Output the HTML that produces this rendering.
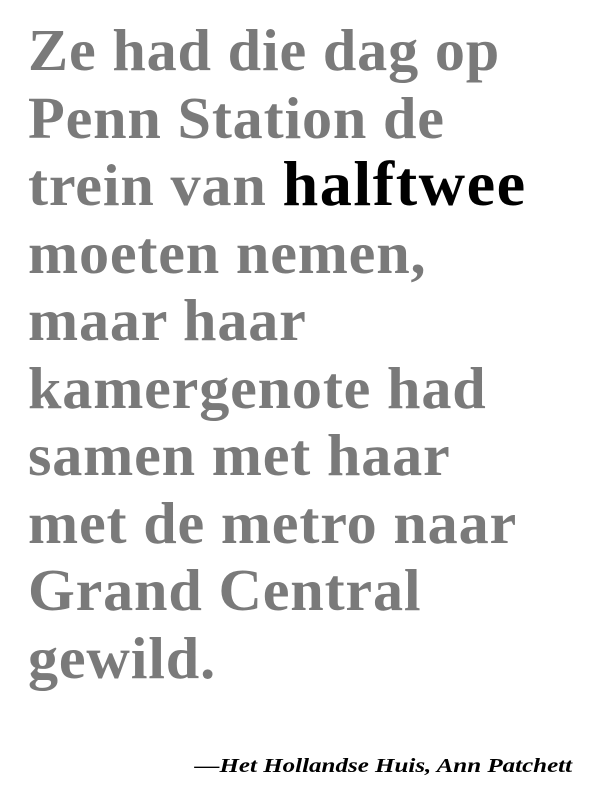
<!DOCTYPE html>
<html><head><meta charset="utf-8"><style>
html,body{margin:0;padding:0;background:#fff;width:600px;height:800px;overflow:hidden}
.t{position:absolute;left:28px;top:17px;font-family:"Liberation Serif",serif;font-weight:bold;font-size:59px;line-height:67.5px;color:#7a7a7a;white-space:nowrap;letter-spacing:0.8px;transform:scaleX(1.02);transform-origin:left top}
.t b{color:#000;font-size:63px;letter-spacing:1.5px;line-height:0}
.c{position:absolute;right:28px;top:755px;font-family:"Liberation Serif",serif;font-style:italic;font-weight:bold;font-size:20px;color:#000;white-space:nowrap;transform:scaleX(1.25);transform-origin:right top}
</style></head><body>
<div class="t">Ze had die dag op<br>Penn Station de<br>trein van <b>halftwee</b><br>moeten nemen,<br>maar haar<br>kamergenote had<br>samen met haar<br>met de metro naar<br>Grand Central<br>gewild.</div>
<div class="c">—Het Hollandse Huis, Ann Patchett</div>
</body></html>
